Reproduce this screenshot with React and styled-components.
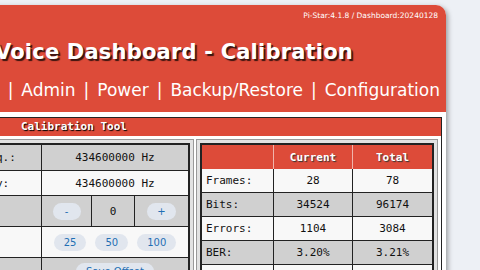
import React from "react";
import styled, { createGlobalStyle } from "styled-components";

const GlobalStyle = createGlobalStyle`
  html, body {
    margin: 0;
    padding: 0;
    background: #edf0f5;
    overflow: hidden;
  }
  body {
    font-family: "DejaVu Sans", Verdana, sans-serif;
  }
`;

const Page = styled.div`
  width: 480px;
  height: 270px;
  overflow: hidden;
  padding-top: 5px;
  box-sizing: border-box;
`;

const Container = styled.div`
  margin-left: -75px;
  width: 521px;
  background: #fff;
  border-radius: 10px 10px 0 0;
  box-shadow: 2px 2px 5px rgba(0, 0, 0, 0.35);
  overflow: hidden;
`;

const Header = styled.header`
  background: #dd4b39;
  color: #fff;
  height: 107px;
  box-sizing: border-box;
  padding: 6px 8px 0 0;
`;

const Version = styled.div`
  font-size: 7.5px;
  line-height: 10px;
  text-align: right;
`;

const Title = styled.h1`
  margin: 18px 0 0;
  display: flex;
  justify-content: flex-end;
  padding-right: 85px;
  font-size: 21px;
  line-height: 26px;
  font-weight: bold;
  letter-spacing: 0.2px;
  white-space: nowrap;
  text-shadow: 2px 2px 1px rgba(0, 0, 0, 0.75);
`;

const Nav = styled.nav`
  margin: 14px -2px 0 0;
  display: flex;
  justify-content: flex-end;
  align-items: baseline;
  font-size: 17px;
  line-height: 22px;
  white-space: nowrap;
`;

const NavLink = styled.span`
  color: #fff;
`;

const Sep = styled.span`
  margin: 0 8px;
`;

const Body = styled.div`
  padding: 5px 4px 4px;
`;

const Content = styled.div`
  border: 1px solid #222;
  background: #fff;
`;

const Bar = styled.div`
  background: #dd4b39;
  color: #fff;
  font: bold 11px/18px "DejaVu Sans Mono", monospace;
  padding-left: 91px;
  text-shadow: 1px 1px 1px #000;
`;

const PanelRow = styled.div`
  display: grid;
  grid-template-columns: 1fr 242px;
  gap: 2px;
  padding: 3px;
`;

const Panel = styled.div`
  border: 1px solid #999;
  padding: 3px;
  background: #e2e2e2;
`;

const Table = styled.table`
  width: 100%;
  border-collapse: separate;
  border-spacing: 0;
  border: 2px solid #222;
  table-layout: fixed;
  font: 11px "DejaVu Sans Mono", monospace;
  color: #111;
`;

const Row = styled.tr`
  background: ${(p) => (p.$shade ? "#d0d0d0" : "#f8f8f8")};
`;

const Cell = styled.td`
  border-right: 1px solid #222;
  border-bottom: 1px solid #222;
  text-align: ${(p) => p.$align || "center"};
  padding: 0 4px;
  height: ${(p) => p.$h || 23}px;
  box-sizing: border-box;
  white-space: nowrap;
  overflow: hidden;

  &:last-child {
    border-right: none;
  }
  tr:last-child > & {
    border-bottom: none;
  }
`;

const HeadCell = styled.th`
  background: #dd4b39;
  color: #fff;
  font-weight: bold;
  height: 24px;
  padding: 0;
  border-right: 1px solid #f0b4ab;
  text-shadow: 1px 1px 1px #333;

  &:last-child {
    border-right: none;
  }
`;

const ButtonGroup = styled.div`
  display: flex;
  justify-content: center;
  gap: 9px;
`;

const PillButton = styled.button`
  font: 10px "DejaVu Sans", sans-serif;
  color: #1f6fb4;
  background: #e1e6ee;
  border: none;
  border-radius: 9px;
  height: 17px;
  min-width: 28px;
  padding: 0 10px;
  vertical-align: middle;
`;

const navLinks = ["Dashboard", "Admin", "Power", "Backup/Restore", "Configuration"];

const stats = [
  { label: "Frames:", current: "28", total: "78" },
  { label: "Bits:", current: "34524", total: "96174" },
  { label: "Errors:", current: "1104", total: "3084" },
  { label: "BER:", current: "3.20%", total: "3.21%" },
];

const CalibrationTable = () => (
  <Table>
    <colgroup>
      <col style={{ width: 103 }} />
      <col style={{ width: 50 }} />
      <col style={{ width: 43 }} />
      <col />
    </colgroup>
    <tbody>
      <Row $shade>
        <Cell $align="left" $h={26}>Base Freq.:</Cell>
        <Cell colSpan={3} $h={26}>434600000 Hz</Cell>
      </Row>
      <Row>
        <Cell $align="left" $h={25}>Frequency:</Cell>
        <Cell colSpan={3} $h={25}>434600000 Hz</Cell>
      </Row>
      <Row $shade>
        <Cell $align="left" $h={31}>Offset:</Cell>
        <Cell $h={31}>
          <PillButton>-</PillButton>
        </Cell>
        <Cell $h={31}>0</Cell>
        <Cell $h={31}>
          <PillButton>+</PillButton>
        </Cell>
      </Row>
      <Row>
        <Cell $align="left" $h={31}>Step:</Cell>
        <Cell colSpan={3} $h={31}>
          <ButtonGroup>
            <PillButton>25</PillButton>
            <PillButton>50</PillButton>
            <PillButton>100</PillButton>
          </ButtonGroup>
        </Cell>
      </Row>
      <Row $shade>
        <Cell $align="left" $h={26}>Save:</Cell>
        <Cell colSpan={3} $h={26}>
          <PillButton>Save Offset</PillButton>
        </Cell>
      </Row>
    </tbody>
  </Table>
);

const StatsTable = () => (
  <Table>
    <colgroup>
      <col style={{ width: 72 }} />
      <col style={{ width: 79 }} />
      <col />
    </colgroup>
    <thead>
      <tr>
        <HeadCell />
        <HeadCell>Current</HeadCell>
        <HeadCell>Total</HeadCell>
      </tr>
    </thead>
    <tbody>
      {stats.map((s, i) => (
        <Row key={s.label} $shade={i % 2 === 1}>
          <Cell $align="left" $h={24}>{s.label}</Cell>
          <Cell $h={24}>{s.current}</Cell>
          <Cell $h={24}>{s.total}</Cell>
        </Row>
      ))}
      <Row>
        <Cell $align="left" $h={26}></Cell>
        <Cell $h={26}>
          <PillButton>Reset</PillButton>
        </Cell>
        <Cell $h={26}></Cell>
      </Row>
    </tbody>
  </Table>
);

export default function App() {
  return (
    <>
      <GlobalStyle />
      <Page>
        <Container>
          <Header>
            <Version>Pi-Star:4.1.8 / Dashboard:20240128</Version>
            <Title>Pi-Star Digital Voice Dashboard - Calibration</Title>
            <Nav>
              {navLinks.map((l, i) => (
                <React.Fragment key={l}>
                  {i > 0 && <Sep>|</Sep>}
                  <NavLink>{l}</NavLink>
                </React.Fragment>
              ))}
            </Nav>
          </Header>
          <Body>
            <Content>
              <Bar>Calibration Tool</Bar>
              <PanelRow>
                <Panel>
                  <CalibrationTable />
                </Panel>
                <Panel>
                  <StatsTable />
                </Panel>
              </PanelRow>
            </Content>
          </Body>
        </Container>
      </Page>
    </>
  );
}
